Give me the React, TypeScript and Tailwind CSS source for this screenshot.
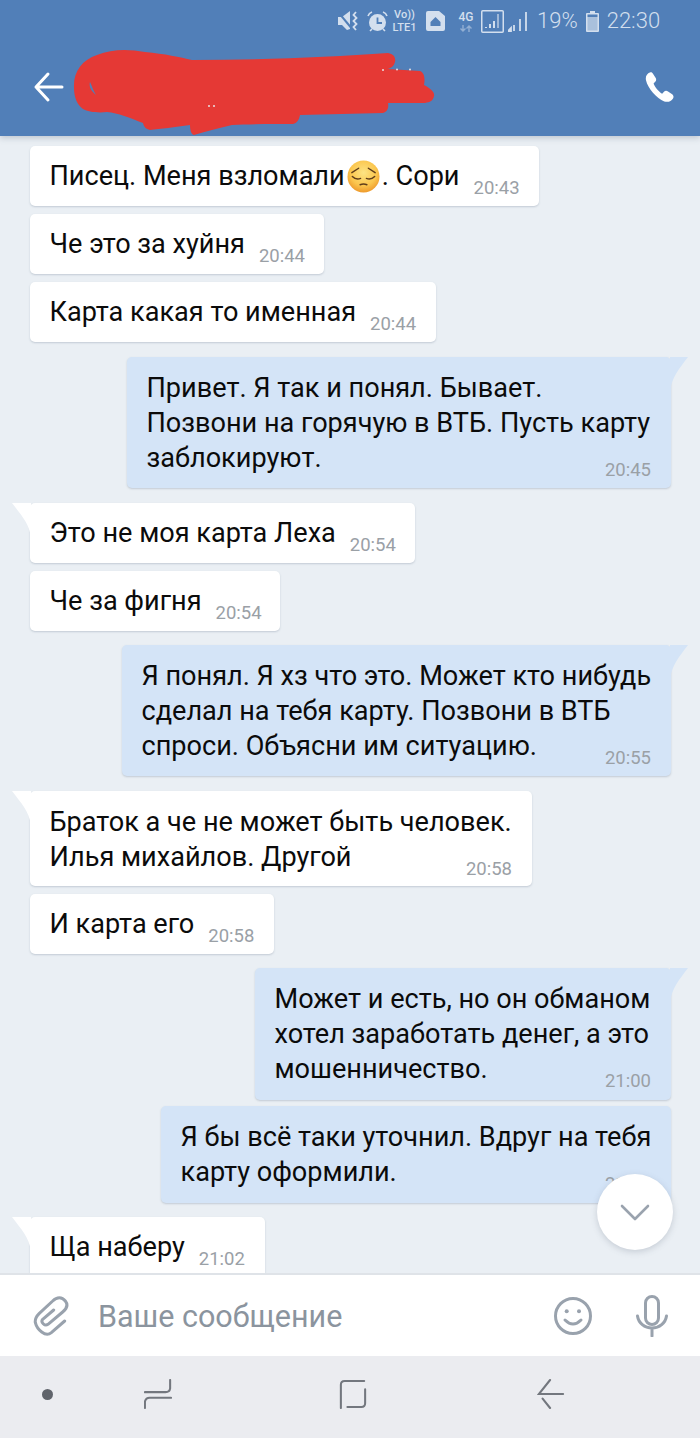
const font = { fontFamily: "Roboto, sans-serif" };

const PensiveFace = () => (
  <svg className="mx-[2px] inline-block h-[33px] w-[33px] align-[-8px]" viewBox="0 0 34 34">
    <defs>
      <radialGradient id="face" cx="50%" cy="38%" r="62%">
        <stop offset="0%" stopColor="#fde484" />
        <stop offset="65%" stopColor="#fbc64e" />
        <stop offset="100%" stopColor="#ee9a2c" />
      </radialGradient>
    </defs>
    <circle cx="17" cy="17" r="16.500" fill="url(#face)" />
    <g fill="none" stroke="#5f3d1a" strokeWidth="1.500" strokeLinecap="round">
      <path d="M5 13 L12 8.500" />
      <path d="M29 13 L22 8.500" />
      <path d="M5.500 17 Q9.500 21 14 19" />
      <path d="M28.500 17 Q24.500 21 20 19" />
      <path d="M13.500 25.500 Q17 24 20.500 25.500" />
    </g>
  </svg>
);

const Tail = ({ side, fill }: { side: "left" | "right"; fill: string }) =>
  side === "left" ? (
    <svg className="absolute left-[-18px] top-0 h-[34px] w-[19px]" viewBox="0 0 19 34">
      <path d="M0 0 H19 V34 C17 20 9 12 0 0 Z" fill={fill} />
    </svg>
  ) : (
    <svg className="absolute right-[-17px] top-0 h-[34px] w-[18px]" viewBox="0 0 18 34">
      <path d="M18 0 H0 V34 C2 20 9 12 18 0 Z" fill={fill} />
    </svg>
  );

type BubbleProps = {
  lines: React.ReactNode[];
  time: string;
  out?: boolean;
  tail?: boolean;
  width: string;
  mt: string;
  height: string;
};

const Bubble = ({ lines, time, out, tail, width, mt, height }: BubbleProps) => (
  <div
    className={`relative shrink-0 rounded-[5px] pl-[19.500px] pr-5 shadow-[0_1px_2px_rgba(120,135,155,0.35)] ${width} ${mt} ${height} ${
      out ? "self-end bg-[#d4e4f7]" : "self-start bg-white"
    }`}
  >
    {tail && <Tail side={out ? "right" : "left"} fill={out ? "#d4e4f7" : "#ffffff"} />}
    {lines.length === 1 ? (
      <div className="flex items-start gap-[14px] pt-[13px]">
        <span className="text-[27.100px] leading-[35px] whitespace-nowrap text-[#0b0b0b]">{lines[0]}</span>
        <span className="pt-[17px] text-[18.500px] leading-[24px] text-[#9aa0a6]">{time}</span>
      </div>
    ) : (
      <div className="flex flex-col pt-[14px]">
        {lines.map((line, i) => (
          <div key={i} className="text-[27.100px] leading-[35px] whitespace-nowrap text-[#0b0b0b]">
            {line}
          </div>
        ))}
        <div className="mt-[-18px] self-end text-[18.500px] leading-[24px] text-[#9aa0a6]">{time}</div>
      </div>
    )}
  </div>
);

const StatusBar = () => (
  <div className="flex h-[42px] items-center pl-[338px] text-[#d3dfee]">
    <svg className="h-[21px] w-[22px]" viewBox="0 0 22 21" fill="currentColor">
      <path d="M0 6h4l8-6v18l-3 1-5-5H0z" />
      <path d="M0 1l15 18" stroke="#517fb8" strokeWidth="2" />
      <path d="M18 1l-2.500 3 3 3-3 3 3 3-3 3 2.500 3" fill="none" stroke="currentColor" strokeWidth="1.800" />
    </svg>
    <svg className="ml-[7px] h-[21px] w-[21px]" viewBox="0 0 21 21">
      <circle cx="10.500" cy="11.500" r="8.500" fill="currentColor" />
      <path d="M10.500 6.500v5.500h4.500" fill="none" stroke="#517fb8" strokeWidth="1.800" />
      <path d="M1 5q1-3 4-4M20 5q-1-3-4-4M3 20l2-2M18 20l-2-2" fill="none" stroke="currentColor" strokeWidth="1.600" />
    </svg>
    <div className="ml-[4px] flex w-[25px] flex-col items-center text-[11px] leading-[13px] font-medium">
      <span>Vo))</span>
      <span>LTE1</span>
    </div>
    <svg className="ml-[9px] h-[20px] w-[19px]" viewBox="0 0 19 20">
      <path
        d="M2 0h11l6 5v13a2 2 0 0 1-2 2H2a2 2 0 0 1-2-2V2a2 2 0 0 1 2-2zM9.500 6L4.500 11v4h10v-4z"
        fill="currentColor"
        fillRule="evenodd"
      />
    </svg>
    <div className="ml-[13px] flex w-[16px] flex-col items-center text-[12px] leading-[12px] font-medium">
      <span>4G</span>
      <svg className="mt-[2px] h-[7px] w-[14px] opacity-50" viewBox="0 0 14 7" fill="none" stroke="currentColor" strokeWidth="1.400">
        <path d="M4 0v6M1.500 3.500L4 6l2.500-2.500M10 7V1M7.500 3.500L10 1l2.500 2.500" />
      </svg>
    </div>
    <svg className="ml-[7px] h-[23px] w-[23px]" viewBox="0 0 23 23">
      <rect x="0.750" y="0.750" width="21.500" height="21.500" rx="1" fill="none" stroke="currentColor" strokeWidth="1.500" />
      <path d="M5 18v-1M9 18v-4M13 18v-7" stroke="currentColor" strokeWidth="2" />
      <path d="M17 18V4" stroke="currentColor" strokeWidth="2" opacity="0.6" />
    </svg>
    <svg className="ml-[4px] h-[21px] w-[21px]" viewBox="0 0 21 21">
      <path d="M0 20l3-3v3zM6 20v-6M12 20V8M18 20V1" fill="currentColor" stroke="currentColor" strokeWidth="1.800" />
    </svg>
    <span className="ml-[8px] text-[22px] leading-none font-light">19%</span>
    <svg className="ml-[8px] h-[21px] w-[13px]" viewBox="0 0 13 21">
      <path d="M4 0h5v2h3a1 1 0 0 1 1 1v17a1 1 0 0 1-1 1H1a1 1 0 0 1-1-1V3a1 1 0 0 1 1-1h3z" fill="currentColor" />
      <rect x="1.500" y="3.500" width="10" height="2.500" fill="#517fb8" />
      <rect x="1.500" y="6" width="10" height="13.500" fill="#a9c0dc" />
    </svg>
    <span className="ml-[8px] text-[22px] leading-none font-light">22:30</span>
  </div>
);

export default function App() {
  return (
    <div className="flex h-[1438px] w-[700px] flex-col overflow-hidden bg-[#eaeff4]" style={font}>
      <header className="relative z-10 h-[136px] shrink-0 bg-[#517fb8] shadow-[0_2px_6px_rgba(90,105,125,0.3)]">
        <StatusBar />
        <div className="flex h-[90px] items-center justify-between pl-[33px] pr-[25px]">
          <svg className="h-[32px] w-[32px]" viewBox="0 0 32 32" fill="none" stroke="#fff" strokeWidth="3" strokeLinecap="round" strokeLinejoin="round">
            <path d="M29 16H3M15 3 L3 16 L15 29" />
          </svg>
          <svg className="h-[30px] w-[30px]" viewBox="2 1 27 28" fill="#fff">
            <path d="M6 1.500C3.500 2.500 1.500 5 2.500 9c1.500 7 10 17 17 19.500 3.500 1 6.500 0 8-2.500 1.200-2 .5-3.500-1-4.500l-3.500-2.300c-1.500-1-2.800-.8-4 .5l-1.500 1.500c-3-1.500-7-6.500-8-9.500l1.500-1.500c1-1 1.200-2.300.5-3.500L8.800 2.500C8 1.200 7.200 1 6 1.500z" />
          </svg>
        </div>
        {/* red scribble over the contact name */}
        <svg className="absolute left-0 top-0 h-[136px] w-[440px]" viewBox="0 0 440 136" fill="#e53935">
          <path
            fillRule="evenodd"
            d="M74 88 C73 72 82 60 97 55 C112 49 128 49 145 52 C165 54 180 57 192 60 C260 60 330 57 388 53 C394 54 396 58 395 62 C394 66 391 68 388 69 L420 71 C425 73 425 80 424 85 C430 88 435 92 434 96 C433 101 430 102 425 103 L388 103 C389 108 387 112 383 113 L300 115 C299 120 297 123 293 124 C275 124 250 124 232 125 C218 128 205 132 194 135 C191 134 190 130 190 125 C175 127 160 129 150 130 C146 129 144 127 143 123 C130 118 118 113 107 112 C98 113 88 112 83 109 C77 105 74 97 74 88 Z M90 82 C89 86 90 90 96 95 C93 90 92 86 90 82 Z"
          />
          <circle cx="383" cy="70" r="1" fill="#e8dfe2" />
          <circle cx="397" cy="69.500" r="1" fill="#e8dfe2" />
          <circle cx="410" cy="69.500" r="1" fill="#e8dfe2" />
          <circle cx="209" cy="106" r="1" fill="#e8dfe2" />
          <circle cx="214" cy="106" r="1" fill="#e8dfe2" />
        </svg>
      </header>

      <main className="relative flex min-h-0 flex-1 flex-col overflow-hidden pl-[30px] pr-[29px]">
        <Bubble mt="mt-[10px]" width="w-[509px]" height="h-[60px]" time="20:43" lines={[<>Писец. Меня взломали<PensiveFace />. Сори</>]} />
        <Bubble mt="mt-2" width="w-[294px]" height="h-[60px]" time="20:44" lines={["Че это за хуйня"]} />
        <Bubble mt="mt-2" width="w-[406px]" height="h-[60px]" time="20:44" lines={["Карта какая то именная"]} />
        <Bubble out tail mt="mt-[15px]" width="w-[544px]" height="h-[131px]" time="20:45" lines={["Привет. Я так и понял. Бывает.", "Позвони на горячую в ВТБ. Пусть карту", "заблокируют."]} />
        <Bubble tail mt="mt-[15px]" width="w-[385px]" height="h-[60px]" time="20:54" lines={["Это не моя карта Леха"]} />
        <Bubble mt="mt-2" width="w-[250px]" height="h-[60px]" time="20:54" lines={["Че за фигня"]} />
        <Bubble out tail mt="mt-[14px]" width="w-[549px]" height="h-[131px]" time="20:55" lines={["Я понял. Я хз что это. Может кто нибудь", "сделал на тебя карту. Позвони в ВТБ", "спроси. Объясни им ситуацию."]} />
        <Bubble tail mt="mt-[15px]" width="w-[502px]" height="h-[95px]" time="20:58" lines={["Браток а че не может быть человек.", "Илья михайлов. Другой"]} />
        <Bubble mt="mt-2" width="w-[244px]" height="h-[60px]" time="20:58" lines={["И карта его"]} />
        <Bubble out tail mt="mt-[14px]" width="w-[416px]" height="h-[132px]" time="21:00" lines={["Может и есть, но он обманом", "хотел заработать денег, а это", "мошенничество."]} />
        <Bubble out mt="mt-[6px]" width="w-[510px]" height="h-[97px]" time="21:00" lines={["Я бы всё таки уточнил. Вдруг на тебя", "карту оформили."]} />
        <Bubble tail mt="mt-[14px]" width="w-[235px]" height="h-[60px]" time="21:02" lines={["Ща наберу"]} />

        {/* scroll to bottom button */}
        <div className="absolute left-[597px] top-[1038px] flex h-[76px] w-[76px] items-center justify-center rounded-full bg-white shadow-[0_2px_6px_rgba(90,105,125,0.25)]">
          <svg className="h-[20px] w-[30px]" viewBox="0 0 30 20" fill="none" stroke="#9aa3ae" strokeWidth="2.600" strokeLinecap="round" strokeLinejoin="round">
            <path d="M2 4l13 13L28 4" />
          </svg>
        </div>
      </main>

      <div className="z-10 flex h-[83px] shrink-0 items-center border-t-2 border-[#dfe3e8] bg-white pl-[31px] pr-[32px]">
        <svg className="h-[42px] w-[38px]" viewBox="27 27 114 126" fill="none" stroke="#99a2ad" strokeWidth="9" strokeLinecap="round" strokeLinejoin="round">
          <path d="M128 105 L88 140 C70 155 45 130 40 110 C38 98 44 90 52 82 L92 45 C105 32 120 32 130 45 C140 58 132 70 122 78 L78 115 C68 122 55 108 62 100 L95 72" />
        </svg>
        <span className="ml-[29px] flex-1 pt-[3px] text-[30.500px] leading-none text-[#8b949e]">Ваше сообщение</span>
        <svg className="h-[38px] w-[38px]" viewBox="0 0 38 38" fill="none" stroke="#99a2ad" strokeWidth="3">
          <circle cx="19" cy="19" r="17.500" />
          <circle cx="12.700" cy="14.300" r="2" fill="#99a2ad" stroke="none" />
          <circle cx="25" cy="14.300" r="2" fill="#99a2ad" stroke="none" />
          <path d="M11 23 Q19 31 27 23" strokeLinecap="round" />
        </svg>
        <svg className="ml-[44px] h-[42px] w-[32px]" viewBox="0 0 32 42" fill="none" stroke="#99a2ad" strokeWidth="3" strokeLinecap="round">
          <rect x="9.500" y="1.500" width="13" height="28" rx="6.500" />
          <path d="M1.500 21c1 7 7 12 14.500 12s13.500-5 14.500-12M16 33v8" />
        </svg>
      </div>

      <nav className="grid h-[82px] shrink-0 grid-cols-[102px_195px_198px_1fr] items-center bg-[#ebecf0] pb-[6px] pl-[42px]">
        <div className="h-[11px] w-[11px] rounded-full bg-[#60646b]" />
        <svg className="h-[30px] w-[28px]" viewBox="0 0 30 32" fill="none" stroke="#73777e" strokeWidth="2.200" strokeLinecap="round">
          <path d="M1 14h22q4.500 0 5-4V1M29 20H6q-4 0-5 4v7" />
        </svg>
        <svg className="h-[30px] w-[28px]" viewBox="0 0 30 32" fill="none" stroke="#73777e" strokeWidth="2.200" strokeLinecap="round">
          <path d="M27 2H6Q2 2 2 6v25M9 30h15q4 0 4-4V11" />
        </svg>
        <svg className="h-[30px] w-[28px]" viewBox="0 0 30 32" fill="none" stroke="#73777e" strokeWidth="2.200" strokeLinecap="round">
          <path d="M14 1L2 16h26M6 21l8 10" />
        </svg>
      </nav>
    </div>
  );
}
